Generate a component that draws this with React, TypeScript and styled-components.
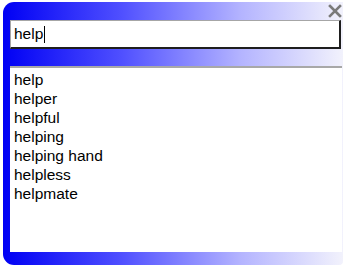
import React from 'react';
import styled, { createGlobalStyle } from 'styled-components';

const GlobalStyle = createGlobalStyle`
  html, body {
    margin: 0;
    padding: 0;
    background: #ffffff;
    font-family: Arial, "Liberation Sans", sans-serif;
  }
`;

const Page = styled.div`
  padding: 2px 7px 6px 3px;
`;

const Window = styled.div`
  position: relative;
  box-sizing: border-box;
  width: 340px;
  height: 263px;
  padding: 18px 1px 13px 7px;
  display: flex;
  flex-direction: column;
  gap: 17px;
  border-radius: 11px 0 4px 11px;
  background: linear-gradient(to right, #0000f4 0%, #5050ff 35%, #b4b4ff 70%, #f2f2fc 100%);
`;

const CloseButton = styled.div`
  position: absolute;
  top: 1px;
  right: 0;
  width: 16px;
  height: 16px;
  display: flex;
  align-items: center;
  justify-content: center;
`;

const SearchBox = styled.div`
  box-sizing: border-box;
  height: 29px;
  margin-right: 1px;
  background: #ffffff;
  border-top: 1px solid #a6a6a6;
  border-left: 1px solid #a6a6a6;
  border-bottom: 2px solid #1e1e1e;
  border-right: 2px solid #1e1e1e;
  display: flex;
  align-items: center;
  padding-left: 3px;
  font-size: 15.5px;
  color: #000;
`;

const Caret = styled.span`
  display: inline-block;
  width: 1px;
  height: 17px;
  margin-left: 1px;
  background: #000;
  vertical-align: middle;
`;

const List = styled.ul`
  flex: 1;
  margin: 0;
  padding: 2px 0 0 4px;
  list-style: none;
  background: #ffffff;
  border-top: 2px solid #a8a8a8;
`;

const Item = styled.li`
  font-size: 15.5px;
  line-height: 19px;
  color: #000;
`;

const words = ['help', 'helper', 'helpful', 'helping', 'helping hand', 'helpless', 'helpmate'];

const App: React.FC = () => (
  <Page>
    <GlobalStyle />
    <Window>
      <CloseButton>
        <svg width="14" height="14" viewBox="0 0 14 14">
          <path d="M2 2 L12 12 M12 2 L2 12" stroke="#7a7a7a" strokeWidth="2.6" strokeLinecap="square" />
        </svg>
      </CloseButton>
      <SearchBox>
        help
        <Caret />
      </SearchBox>
      <List>
        {words.map((w) => (
          <Item key={w}>{w}</Item>
        ))}
      </List>
    </Window>
  </Page>
);

export default App;
